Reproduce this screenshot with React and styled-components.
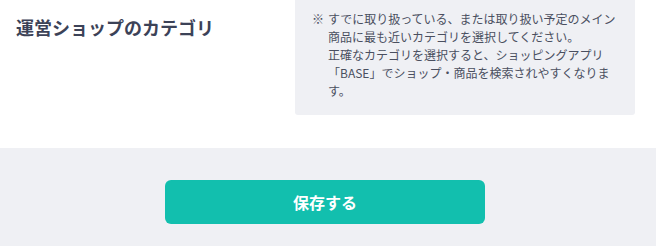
import React from 'react';
import styled, { createGlobalStyle } from 'styled-components';

const GlobalStyle = createGlobalStyle`
  html, body {
    margin: 0;
    padding: 0;
    background: #ffffff;
    font-family: "Noto Sans CJK JP", "Noto Sans", sans-serif;
  }
`;

const Page = styled.div`
  width: 656px;
  height: 246px;
  display: flex;
  flex-direction: column;
  overflow: hidden;
`;

const Section = styled.div`
  height: 148px;
  display: grid;
  grid-template-columns: 279px 340px;
  padding-left: 16px;
  background: #ffffff;
`;

const Heading = styled.h2`
  margin: 14px 0 0;
  font-size: 18px;
  line-height: 27px;
  font-weight: 700;
  color: #3c4257;
`;

const NoteBox = styled.div`
  align-self: start;
  height: 115px;
  box-sizing: border-box;
  padding: 10px 16px 0 17px;
  background: #eff0f4;
  border-radius: 0 0 3px 3px;
  display: flex;
  gap: 4px;
`;

const Mark = styled.span`
  flex: none;
  font-size: 12px;
  line-height: 18px;
  color: #4a4f5f;
`;

const NoteText = styled.p`
  margin: 0;
  width: 290px;
  font-size: 12px;
  line-height: 18px;
  color: #4a4f5f;
`;

const Footer = styled.div`
  flex: 1;
  background: #eff0f4;
  display: flex;
  justify-content: center;
  align-items: flex-start;
  padding: 32px 6px 0 0;
`;

const SaveButton = styled.button`
  width: 320px;
  height: 44px;
  border: none;
  border-radius: 6px;
  background: #12bfae;
  color: #ffffff;
  font-family: inherit;
  font-size: 16px;
  font-weight: 700;
  cursor: pointer;
`;

export default function App() {
  return (
    <Page>
      <GlobalStyle />
      <Section>
        <Heading>運営ショップのカテゴリ</Heading>
        <NoteBox>
          <Mark>※</Mark>
          <NoteText>
            すでに取り扱っている、または取り扱い予定のメイン商品に最も近いカテゴリを選択してください。
            <br />
            正確なカテゴリを選択すると、ショッピングアプリ「BASE」でショップ・商品を検索されやすくなります。
          </NoteText>
        </NoteBox>
      </Section>
      <Footer>
        <SaveButton>保存する</SaveButton>
      </Footer>
    </Page>
  );
}
